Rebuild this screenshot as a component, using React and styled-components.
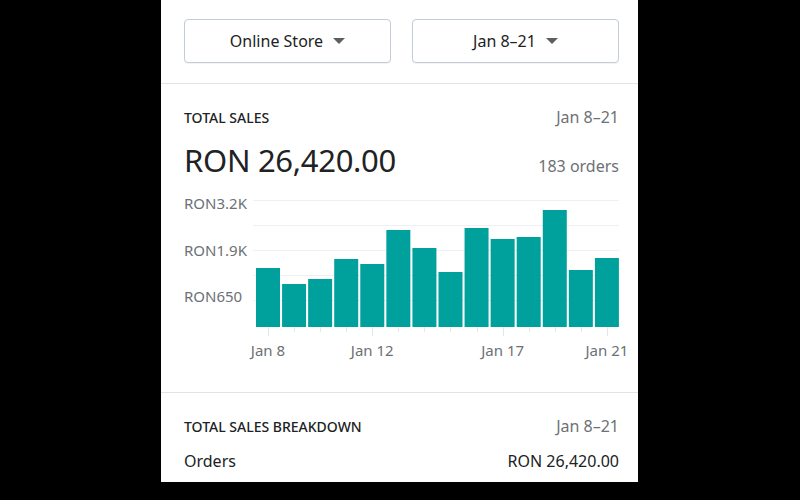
import React from "react";
import styled, { createGlobalStyle } from "styled-components";

const GlobalStyle = createGlobalStyle`
  html, body { margin: 0; padding: 0; background: #000; }
  body { font-family: "Noto Sans", "Open Sans", Arial, sans-serif; }
`;

const Page = styled.div`
  width: 800px;
  height: 500px;
  background: #000;
  display: flex;
  padding-left: 161px;
  box-sizing: border-box;
`;

const Panel = styled.div`
  width: 477px;
  height: 482px;
  background: #fff;
  overflow: hidden;
  display: flex;
  flex-direction: column;
`;

const Toolbar = styled.div`
  display: grid;
  grid-template-columns: 207px 207px;
  column-gap: 21px;
  padding: 19px 19px 20px 23px;
  border-bottom: 1px solid #e1e3e5;
`;

const SelectButton = styled.button`
  height: 44px;
  border: 1px solid #c4cdd5;
  border-radius: 4px;
  background: #fff;
  box-shadow: 0 1px 0 rgba(22, 29, 37, 0.05);
  display: flex;
  align-items: center;
  justify-content: center;
  gap: 10px;
  font-family: inherit;
  font-size: 16px;
  color: #202223;
  padding: 0 0 1px;
  cursor: pointer;
`;

const Caret = styled.span`
  width: 0;
  height: 0;
  border-left: 6px solid transparent;
  border-right: 6px solid transparent;
  border-top: 6px solid #5c5f62;
  margin-top: 1px;
`;

const Section = styled.section`
  padding: ${(p) => p.$pad || "22px 19px 0 23px"};
  border-bottom: ${(p) => (p.$divider ? "1px solid #e1e3e5" : "none")};
`;

const Row = styled.div`
  display: flex;
  justify-content: space-between;
  align-items: baseline;
  margin-top: ${(p) => p.$mt || 0}px;
`;

const Heading = styled.h2`
  margin: 0;
  font-size: 14px;
  font-weight: 500;
  color: #202223;
  text-transform: uppercase;
  letter-spacing: 0;
`;

const Muted = styled.span`
  font-size: 16px;
  color: #6d7175;
`;

const Amount = styled.div`
  font-size: 31px;
  color: #202223;
  letter-spacing: -0.3px;
`;

const Value = styled.span`
  font-size: 16px;
  color: #202223;
`;

const ChartWrap = styled.div`
  margin: 9px -19px 0 0;
  height: 172px;
`;

const BAR_TOPS = [268, 284, 279, 259, 264, 230, 248, 272, 228, 239, 237, 210, 270, 258];
const BASE = 327;
const PITCH = 26.07;
const LABELS = { 0: "Jan 8", 4: "Jan 12", 9: "Jan 17", 13: "Jan 21" };
const FONT = "Noto Sans, Open Sans, sans-serif";

function SalesChart() {
  const ox = 184;
  const oy = 190;
  return (
    <svg width="454" height="172" viewBox={`${ox} ${oy} 454 172`}>
      {[200, 225, 250, 275, 300].map((y) => (
        <line key={y} x1="253" x2="619" y1={y + 0.5} y2={y + 0.5} stroke="#eef0f2" strokeWidth="1" />
      ))}
      {[
        ["RON3.2K", 209],
        ["RON1.9K", 256],
        ["RON650", 302],
      ].map(([t, y]) => (
        <text key={t} x="184" y={y} fontSize="15" fill="#6d7175" fontFamily={FONT}>
          {t}
        </text>
      ))}
      {BAR_TOPS.map((top, i) => {
        const x = 256 + i * PITCH;
        const cx = Math.round(x + 12) + 0.5;
        const labelled = LABELS[i] !== undefined;
        return (
          <g key={i}>
            <rect x={x} y={top} width="24" height={BASE - top} fill="#00a19d" />
            <line x1={cx} x2={cx} y1={BASE} y2={labelled ? 336 : 332} stroke="#e4e7ea" strokeWidth="1" />
            {labelled && (
              <text x={x + 12} y="356" textAnchor="middle" fontSize="15" fill="#6d7175" fontFamily={FONT}>
                {LABELS[i]}
              </text>
            )}
          </g>
        );
      })}
    </svg>
  );
}

export default function App() {
  return (
    <>
      <GlobalStyle />
      <Page>
        <Panel>
          <Toolbar>
            <SelectButton>
              Online Store <Caret />
            </SelectButton>
            <SelectButton>
              Jan 8–21 <Caret />
            </SelectButton>
          </Toolbar>
          <Section $divider $pad="22px 19px 30px 23px">
            <Row>
              <Heading>Total Sales</Heading>
              <Muted>Jan 8–21</Muted>
            </Row>
            <Row $mt={11}>
              <Amount>RON 26,420.00</Amount>
              <Muted>183 orders</Muted>
            </Row>
            <ChartWrap>
              <SalesChart />
            </ChartWrap>
          </Section>
          <Section $pad="22px 19px 0 23px">
            <Row>
              <Heading>Total Sales Breakdown</Heading>
              <Muted>Jan 8–21</Muted>
            </Row>
            <Row $mt={13}>
              <Value>Orders</Value>
              <Value>RON 26,420.00</Value>
            </Row>
          </Section>
        </Panel>
      </Page>
    </>
  );
}
